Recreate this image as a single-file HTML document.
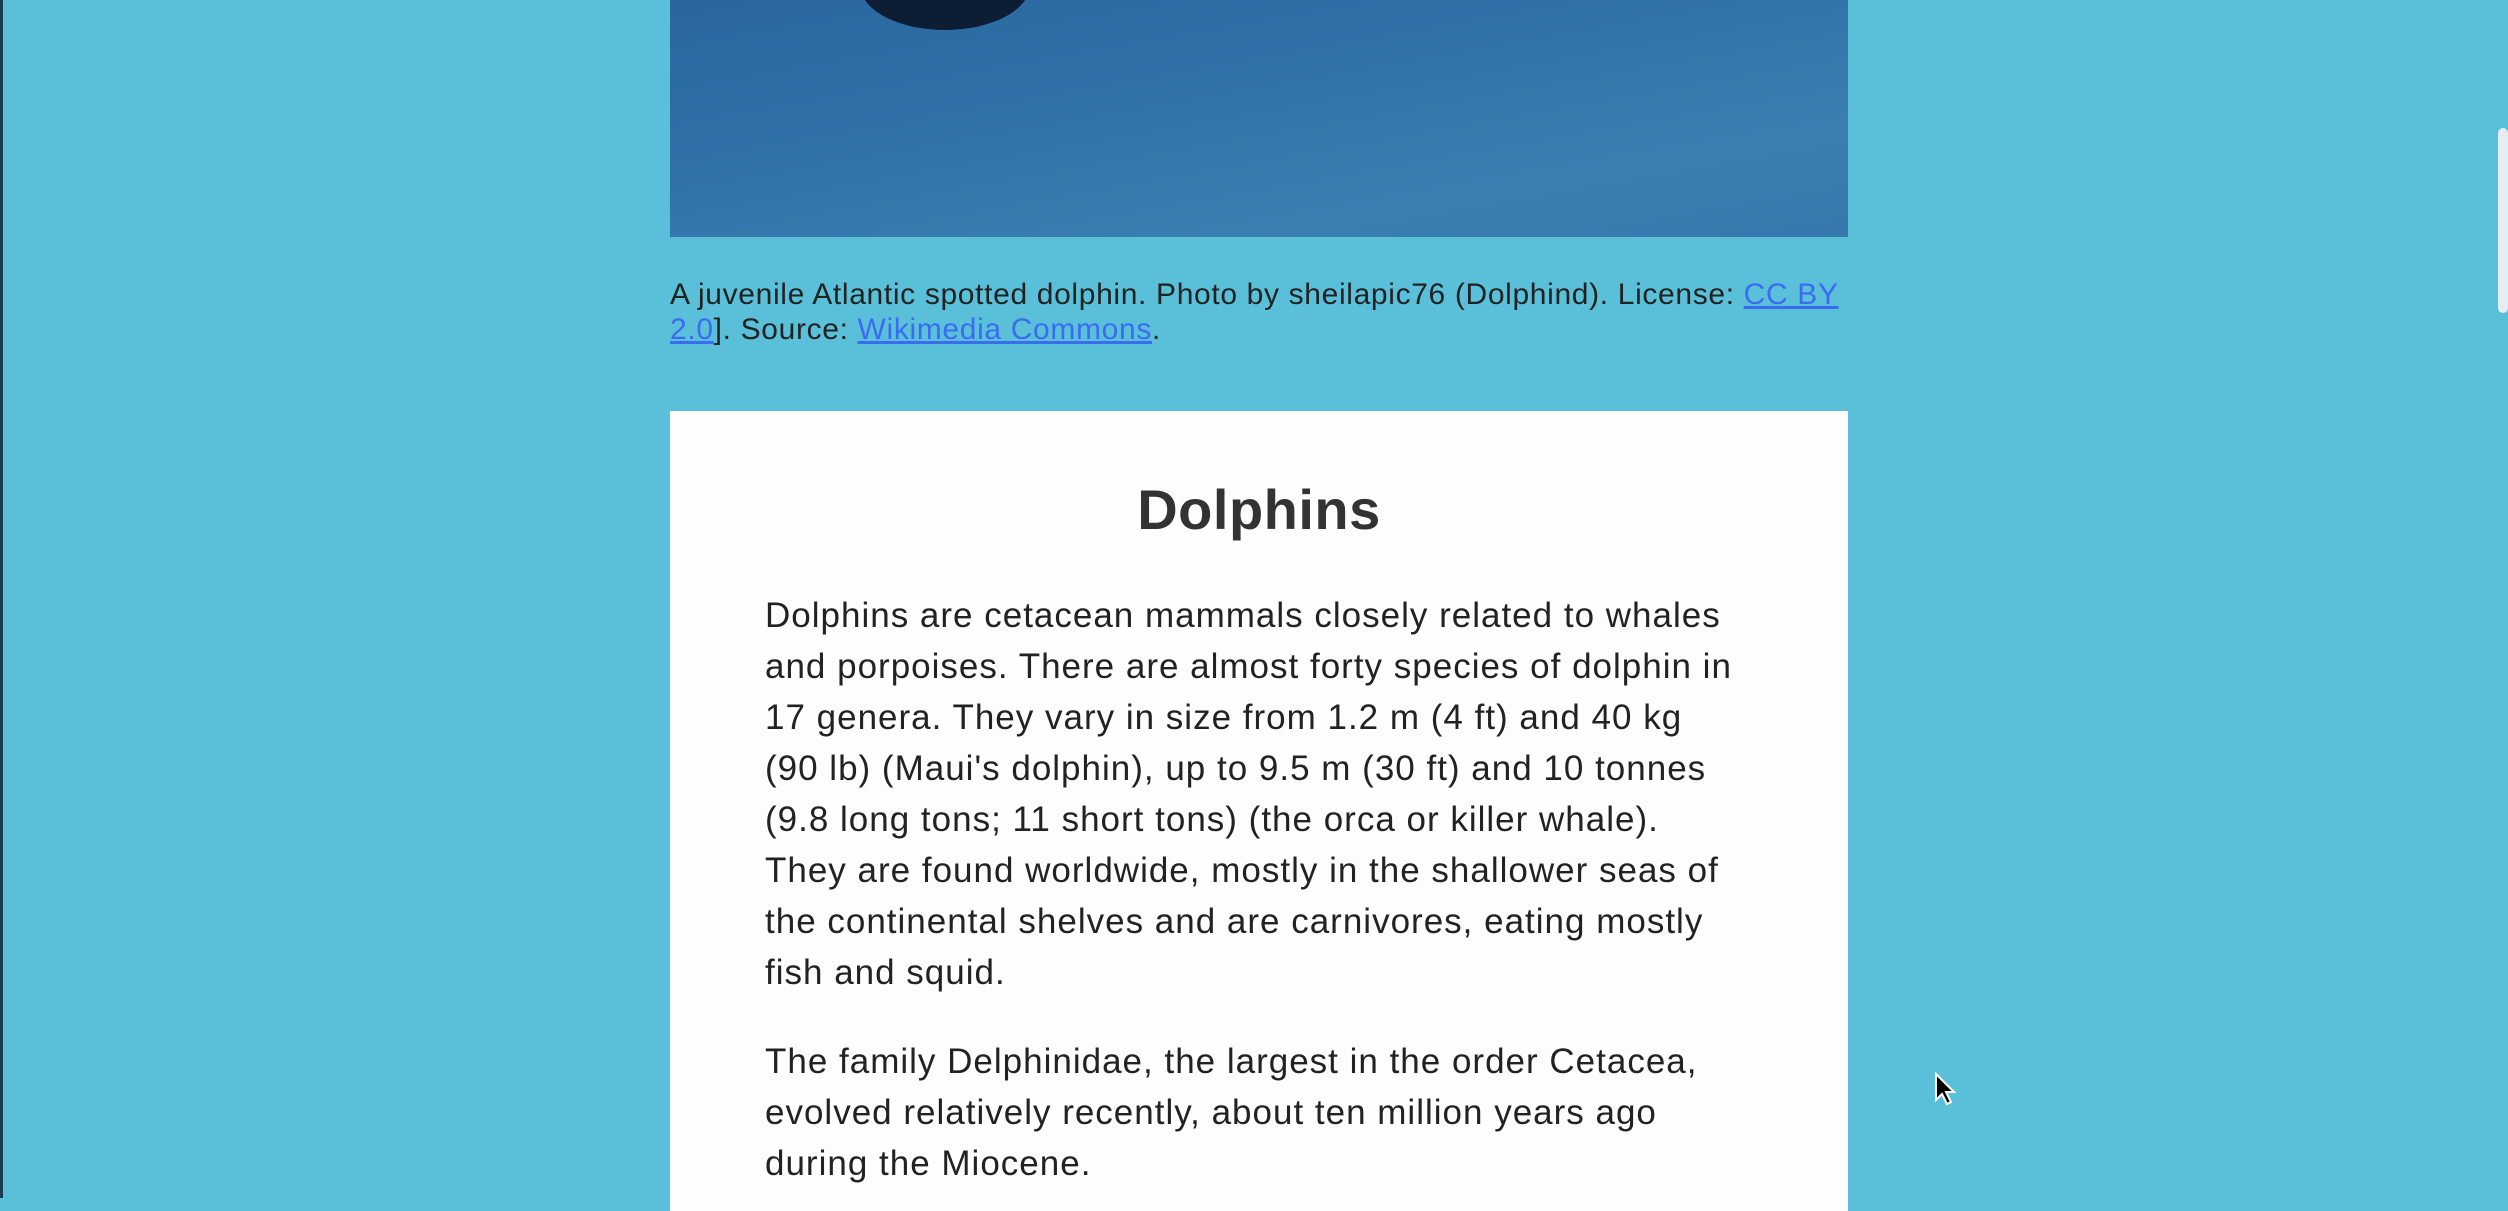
<!DOCTYPE html>
<html><head><style>
html,body{margin:0;padding:0;width:2508px;height:1198px;overflow:hidden;background:#5ac0da;font-family:"Liberation Sans",sans-serif;}
.edge{position:absolute;left:0;top:0;width:3px;height:1198px;background:#1c3a52;}
.img{position:absolute;left:670px;top:0;width:1178px;height:237px;background:linear-gradient(170deg,#2a66a0 0%,#2f72a8 40%,#3a7fb2 75%,#3578ad 100%);overflow:hidden;}
.img .blob{position:absolute;left:190px;top:-60px;width:170px;height:90px;border-radius:50%;background:#0d1d33;}
.cap{position:absolute;left:670px;top:277px;width:1178px;font-size:30px;line-height:35px;color:#222;letter-spacing:0.65px;}
.cap a{color:#3a6cf0;text-decoration:underline;}
.card{position:absolute;left:670px;top:411px;width:1178px;height:800px;background:#fdfdfd;}
h1{margin:0;position:absolute;top:66px;left:0;width:100%;text-align:center;font-size:56px;color:#333;font-weight:bold;letter-spacing:0.5px;}
.p{position:absolute;left:95px;width:972px;font-size:35px;line-height:51px;color:#222;letter-spacing:1px;}
.sb{position:absolute;left:2498px;top:128px;width:10px;height:185px;background:#e6eef2;border-radius:5px;}
</style></head><body>
<div class="edge"></div>
<div class="img"><div class="blob"></div></div>
<div class="cap">A juvenile Atlantic spotted dolphin. Photo by sheilapic76 (Dolphind). License: <a>CC BY 2.0</a>]. Source: <a>Wikimedia Commons</a>.</div>
<div class="card">
<h1>Dolphins</h1>
<div class="p" style="top:179px">Dolphins are cetacean mammals closely related to whales and porpoises. There are almost forty species of dolphin in 17 genera. They vary in size from 1.2 m (4 ft) and 40 kg (90 lb) (Maui's dolphin), up to 9.5 m (30 ft) and 10 tonnes (9.8 long tons; 11 short tons) (the orca or killer whale). They are found worldwide, mostly in the shallower seas of the continental shelves and are carnivores, eating mostly fish and squid.</div>
<div class="p" style="top:625px">The family Delphinidae, the largest in the order Cetacea, evolved relatively recently, about ten million years ago during the Miocene.</div>
</div>
<div class="sb"></div>
<svg style="position:absolute;left:1934px;top:1072px" width="24" height="34" viewBox="0 0 12 17"><path d="M1 1 L1 14 L4 11 L6.5 16 L8.5 15 L6 10 L10 10 Z" fill="#000" stroke="#fff" stroke-width="1"/></svg>
</body></html>
